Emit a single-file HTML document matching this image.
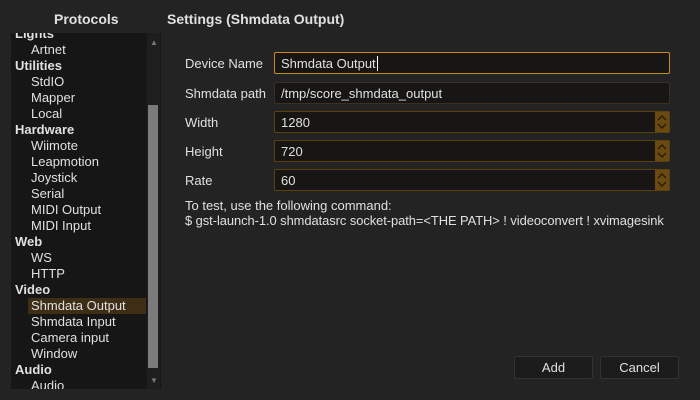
<!DOCTYPE html><html><head><style>
body{margin:0;width:700px;height:400px;background:#232323;font-family:"Liberation Sans","DejaVu Sans",sans-serif;font-size:13px;color:#e0e0e0;position:relative;overflow:hidden}
.a{position:absolute;white-space:nowrap}
.t{font-weight:bold;font-size:14px}
#list{position:absolute;left:11px;top:33px;width:150px;height:356px;background:#161616;overflow:hidden}
.r{position:absolute;height:16px;line-height:16px;font-size:13px}
.h{left:4px;font-weight:bold}
.c{left:20px}
.sel{background:#3e2e16;left:17px;width:115px;padding-left:3px}
.f{position:absolute;left:274px;background:#171615;border:1px solid #5e400c;border-radius:2px;line-height:22px;padding-left:6px;box-sizing:border-box;width:396px;height:22px}
.sp{position:absolute;right:0;top:0;width:14px;height:20px;background:#6b4a12}
.lb{position:absolute;left:185px;white-space:nowrap}
.b{position:absolute;top:356px;width:79px;height:23px;background:#1c1c1c;border:1px solid #333;border-radius:2px;box-sizing:border-box;text-align:center;line-height:21px}
</style></head><body>
<div class="a t" style="left:54px;top:11px">Protocols</div>
<div class="a t" style="left:167px;top:11px">Settings (Shmdata Output)</div>
<div id="list">
<div class="r h" style="top:-7px">Lights</div>
<div class="r c" style="top:9px">Artnet</div>
<div class="r h" style="top:25px">Utilities</div>
<div class="r c" style="top:41px">StdIO</div>
<div class="r c" style="top:57px">Mapper</div>
<div class="r c" style="top:73px">Local</div>
<div class="r h" style="top:89px">Hardware</div>
<div class="r c" style="top:105px">Wiimote</div>
<div class="r c" style="top:121px">Leapmotion</div>
<div class="r c" style="top:137px">Joystick</div>
<div class="r c" style="top:153px">Serial</div>
<div class="r c" style="top:169px">MIDI Output</div>
<div class="r c" style="top:185px">MIDI Input</div>
<div class="r h" style="top:201px">Web</div>
<div class="r c" style="top:217px">WS</div>
<div class="r c" style="top:233px">HTTP</div>
<div class="r h" style="top:249px">Video</div>
<div class="r c sel" style="top:265px">Shmdata Output</div>
<div class="r c" style="top:281px">Shmdata Input</div>
<div class="r c" style="top:297px">Camera input</div>
<div class="r c" style="top:313px">Window</div>
<div class="r h" style="top:329px">Audio</div>
<div class="r c" style="top:345px">Audio</div>
<div style="position:absolute;left:136px;top:0;width:13px;height:356px;background:#1e1e1e"></div>
<div style="position:absolute;left:137px;top:72px;width:10px;height:263px;background:#7b7b7b"></div>
<div style="position:absolute;left:139px;top:5px;color:#777;font-size:8px">▲</div>
<div style="position:absolute;left:139px;top:343px;color:#777;font-size:8px">▼</div>
</div>
<div class="lb" style="top:56px">Device Name</div>
<div class="f" style="top:52px;border-color:#c98a1c">Shmdata Output<span style="border-left:1px solid #fff;margin-left:1px"></span></div>
<div class="lb" style="top:86px">Shmdata path</div>
<div class="f" style="top:82px;border-color:#3d3020">/tmp/score_shmdata_output</div>
<div class="lb" style="top:115px">Width</div>
<div class="f" style="top:111px">1280<div class="sp"><svg width="14" height="20"><path d="M3 8l4-4 4 4M3 12l4 4 4-4" stroke="#2a1e08" stroke-width="1.5" fill="none"/></svg></div></div>
<div class="lb" style="top:144px">Height</div>
<div class="f" style="top:140px">720<div class="sp"><svg width="14" height="20"><path d="M3 8l4-4 4 4M3 12l4 4 4-4" stroke="#2a1e08" stroke-width="1.5" fill="none"/></svg></div></div>
<div class="lb" style="top:173px">Rate</div>
<div class="f" style="top:169px">60<div class="sp"><svg width="14" height="20"><path d="M3 8l4-4 4 4M3 12l4 4 4-4" stroke="#2a1e08" stroke-width="1.5" fill="none"/></svg></div></div>
<div class="lb" style="top:198px">To test, use the following command:</div>
<div class="lb" style="top:213px;letter-spacing:-0.05px;font-size:12.9px">$ gst-launch-1.0 shmdatasrc socket-path=&lt;THE PATH&gt; ! videoconvert ! xvimagesink</div>
<div class="b" style="left:514px">Add</div>
<div class="b" style="left:600px">Cancel</div>
</body></html>
